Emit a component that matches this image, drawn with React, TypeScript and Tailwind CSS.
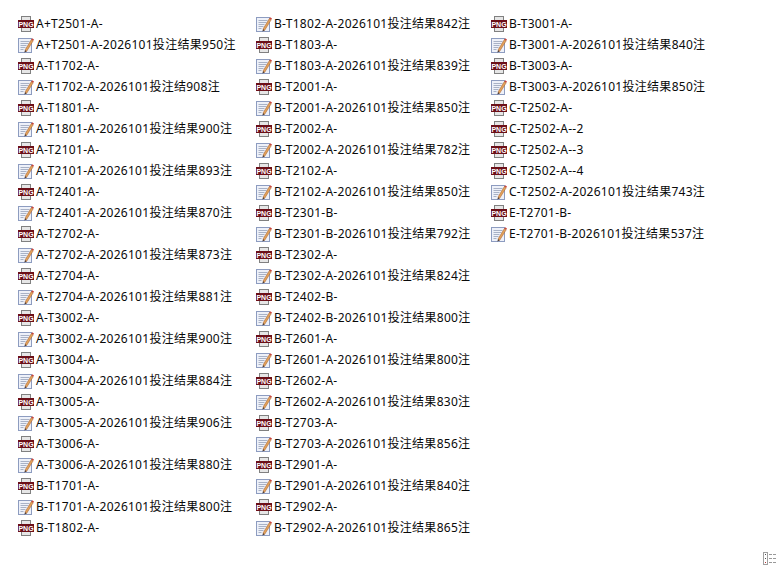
const col1 = [
  "p:A+T2501-A-", "t:A+T2501-A-2026101投注结果950注", "p:A-T1702-A-", "t:A-T1702-A-2026101投注结908注",
  "p:A-T1801-A-", "t:A-T1801-A-2026101投注结果900注", "p:A-T2101-A-", "t:A-T2101-A-2026101投注结果893注",
  "p:A-T2401-A-", "t:A-T2401-A-2026101投注结果870注", "p:A-T2702-A-", "t:A-T2702-A-2026101投注结果873注",
  "p:A-T2704-A-", "t:A-T2704-A-2026101投注结果881注", "p:A-T3002-A-", "t:A-T3002-A-2026101投注结果900注",
  "p:A-T3004-A-", "t:A-T3004-A-2026101投注结果884注", "p:A-T3005-A-", "t:A-T3005-A-2026101投注结果906注",
  "p:A-T3006-A-", "t:A-T3006-A-2026101投注结果880注", "p:B-T1701-A-", "t:B-T1701-A-2026101投注结果800注",
  "p:B-T1802-A-",
];
const col2 = [
  "t:B-T1802-A-2026101投注结果842注", "p:B-T1803-A-", "t:B-T1803-A-2026101投注结果839注", "p:B-T2001-A-",
  "t:B-T2001-A-2026101投注结果850注", "p:B-T2002-A-", "t:B-T2002-A-2026101投注结果782注", "p:B-T2102-A-",
  "t:B-T2102-A-2026101投注结果850注", "p:B-T2301-B-", "t:B-T2301-B-2026101投注结果792注", "p:B-T2302-A-",
  "t:B-T2302-A-2026101投注结果824注", "p:B-T2402-B-", "t:B-T2402-B-2026101投注结果800注", "p:B-T2601-A-",
  "t:B-T2601-A-2026101投注结果800注", "p:B-T2602-A-", "t:B-T2602-A-2026101投注结果830注", "p:B-T2703-A-",
  "t:B-T2703-A-2026101投注结果856注", "p:B-T2901-A-", "t:B-T2901-A-2026101投注结果840注", "p:B-T2902-A-",
  "t:B-T2902-A-2026101投注结果865注",
];
const col3 = [
  "p:B-T3001-A-", "t:B-T3001-A-2026101投注结果840注", "p:B-T3003-A-", "t:B-T3003-A-2026101投注结果850注",
  "p:C-T2502-A-", "p:C-T2502-A--2", "p:C-T2502-A--3", "p:C-T2502-A--4",
  "t:C-T2502-A-2026101投注结果743注", "p:E-T2701-B-", "t:E-T2701-B-2026101投注结果537注",
];

function PngIcon() {
  return (
    <svg width="16" height="16" viewBox="0 0 16 16" className="shrink-0">
      <rect x="3.5" y="0.5" width="9" height="5" fill="#e6e6e6" stroke="#808080" />
      <rect x="3.5" y="11" width="9" height="4.5" fill="#e6e6e6" stroke="#808080" />
      <rect x="0" y="4" width="16" height="8" fill="#6c0f18" />
      <text
        x="8"
        y="10.7"
        textAnchor="middle"
        fontSize="7"
        fontWeight="700"
        fill="#ffffff"
        fontFamily='"Liberation Sans", sans-serif'
        letterSpacing="0"
      >
        PNG
      </text>
    </svg>
  );
}

function NoteIcon() {
  return (
    <svg width="16" height="16" viewBox="0 0 16 16" className="shrink-0">
      <rect x="0.5" y="1.5" width="13" height="14" fill="#eef1f9" stroke="#8d9cc0" />
      <path d="M2.5 4.5h9M2.5 6.5h8M2.5 8.5h6M2.5 10.5h5M2.5 12.5h3" stroke="#a9b2c6" strokeWidth="1" />
      <path d="M7 13 L13.4 2.6 L15.2 3.8 L8.6 14.4 Z" fill="#e0a35a" stroke="#a8592a" strokeWidth="0.5" />
      <path d="M13.4 2.6 L14.2 1.2 L16 2.4 L15.2 3.8 Z" fill="#c9453f" />
      <path d="M7 13 L6.4 15.6 L8.6 14.4 Z" fill="#4a3a30" />
    </svg>
  );
}

function FileItem({ item }: { item: string }) {
  const kind = item[0];
  const name = item.slice(2);
  return (
    <div className="flex h-[21px] items-center gap-0.5 whitespace-nowrap">
      {kind === "p" ? <PngIcon /> : <NoteIcon />}
      <span>{name}</span>
    </div>
  );
}

function ListColumn({ items, width }: { items: string[]; width: string }) {
  return (
    <div className={`flex flex-col ${width}`}>
      {items.map((item) => (
        <FileItem key={item} item={item} />
      ))}
    </div>
  );
}

export default function App() {
  return (
    <div
      className="relative h-[571px] w-[778px] overflow-hidden bg-white text-xs tracking-[0.28px] text-[#0a0a0a]"
      style={{ fontFamily: '"Noto Sans", "Noto Sans CJK SC", sans-serif' }}
    >
      <div className="flex pl-[18px] pt-[13px]">
        <ListColumn items={col1} width="w-[238px]" />
        <ListColumn items={col2} width="w-[235px]" />
        <ListColumn items={col3} width="w-[235px]" />
      </div>
      {/* view toggle, bottom right */}
      <svg width="16" height="14" viewBox="0 0 16 14" className="absolute bottom-[5px] right-0">
        <rect x="1.5" y="0.5" width="4" height="12" fill="#fff" stroke="#a0a0a0" />
        <path d="M3 2.5h1M3 6.5h1" stroke="#555" />
        <path d="M3 10.5h1" stroke="#b33" />
        <path d="M7 2.5h3M11 2.5h3M7 6.5h3M11 6.5h3M7 10.5h3M11 10.5h3" stroke="#999" />
      </svg>
    </div>
  );
}
